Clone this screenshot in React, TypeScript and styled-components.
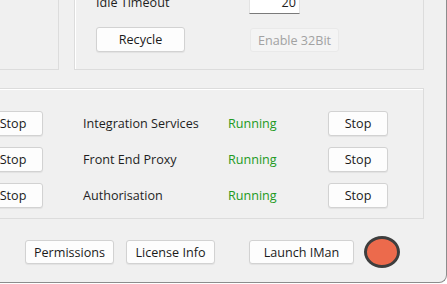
import React from "react";
import styled, { createGlobalStyle } from "styled-components";

const Global = createGlobalStyle`
  html, body { margin: 0; padding: 0; background: #ffffff; }
  body { font-family: "Open Sans", "Liberation Sans", sans-serif; }
`;

const Window = styled.div`
  width: 447px;
  height: 283px;
  box-sizing: border-box;
  background: #f0f0f0;
  border-right: 1px solid #8c8c8c;
  border-bottom: 1px solid #8c8c8c;
  border-bottom-right-radius: 8px;
  overflow: hidden;
  font-family: "Open Sans", "Liberation Sans", sans-serif;
  font-size: 12.6px;
  color: #1e1e1e;
`;

const Inner = styled.div`
  margin-top: -40px;
  margin-left: -30px;
  display: flex;
  flex-direction: column;
`;

const TopRow = styled.div`
  display: flex;
  height: 110px;
  gap: 15px;
`;

const Group = styled.div<{ $w: number }>`
  width: ${(p) => p.$w}px;
  box-sizing: border-box;
  border: 1px solid #dcdcdc;
  box-shadow: inset 1px 1px 0 #ffffff;
`;

const SettingsGroup = styled(Group)`
  display: grid;
  grid-template-columns: 153px auto;
  align-content: end;
  align-items: end;
  row-gap: 13px;
  padding: 0 0 17px 21px;
`;

const FieldLabel = styled.div`
  line-height: 16px;
  padding-bottom: 3px;
`;

const NumberBox = styled.div`
  width: 51px;
  height: 21px;
  box-sizing: border-box;
  background: #ffffff;
  border: 1px solid #e3e3e3;
  border-bottom: 1px solid #7a7a7a;
  text-align: right;
  padding-right: 3px;
  line-height: 18px;
`;

const Button = styled.div<{ $w: number; $h?: number; $disabled?: boolean }>`
  width: ${(p) => p.$w}px;
  height: ${(p) => p.$h ?? 24}px;
  box-sizing: border-box;
  display: flex;
  align-items: center;
  justify-content: center;
  background: ${(p) => (p.$disabled ? "#f4f4f4" : "#fdfdfd")};
  border: 1px solid ${(p) => (p.$disabled ? "#e9e9e9" : "#d2d2d2")};
  border-radius: 3px;
  box-shadow: ${(p) => (p.$disabled ? "none" : "0 1px 1px rgba(0,0,0,0.06)")};
  color: ${(p) => (p.$disabled ? "#a2a2a2" : "#1a1a1a")};
  white-space: nowrap;
`;

const ServicesGroup = styled(Group)`
  margin-top: 18px;
  height: 131px;
  padding: 22px 0 0 12px;
  display: grid;
  grid-template-columns: 100px 145px 100px 60px;
  grid-auto-rows: 25px;
  row-gap: 11px;
  align-items: center;
`;

const ServiceName = styled.div`
  color: #1e1e1e;
`;

const Status = styled.div`
  color: #229a22;
`;

const BottomBar = styled.div`
  margin-top: 17px;
  padding-left: 55px;
  display: flex;
  align-items: center;
`;

const Spacer = styled.div<{ $w: number }>`
  width: ${(p) => p.$w}px;
  flex: none;
`;

const StatusLamp = styled.div`
  width: 36px;
  height: 32px;
  box-sizing: border-box;
  border-radius: 50%;
  border: 3px solid #3e3e3e;
  background: #ec6a4c;
`;

const services = ["Integration Services", "Front End Proxy", "Authorisation"];

export default function App() {
  return (
    <>
      <Global />
      <Window>
        <Inner>
          <TopRow>
            <Group $w={89} />
            <SettingsGroup $w={350}>
              <FieldLabel>Idle Timeout</FieldLabel>
              <NumberBox>20</NumberBox>
              <Button $w={89} $h={25}>Recycle</Button>
              <Button $w={89} $disabled style={{ marginLeft: 1 }}>
                Enable 32Bit
              </Button>
            </SettingsGroup>
          </TopRow>
          <ServicesGroup $w={454}>
            {services.map((name) => (
              <React.Fragment key={name}>
                <Button $w={60} $h={25}>Stop</Button>
                <ServiceName>{name}</ServiceName>
                <Status>Running</Status>
                <Button $w={60} $h={25}>Stop</Button>
              </React.Fragment>
            ))}
          </ServicesGroup>
          <BottomBar>
            <Button $w={89}>Permissions</Button>
            <Spacer $w={12} />
            <Button $w={89}>License Info</Button>
            <Spacer $w={34} />
            <Button $w={105}>Launch IMan</Button>
            <Spacer $w={10} />
            <StatusLamp />
          </BottomBar>
        </Inner>
      </Window>
    </>
  );
}
